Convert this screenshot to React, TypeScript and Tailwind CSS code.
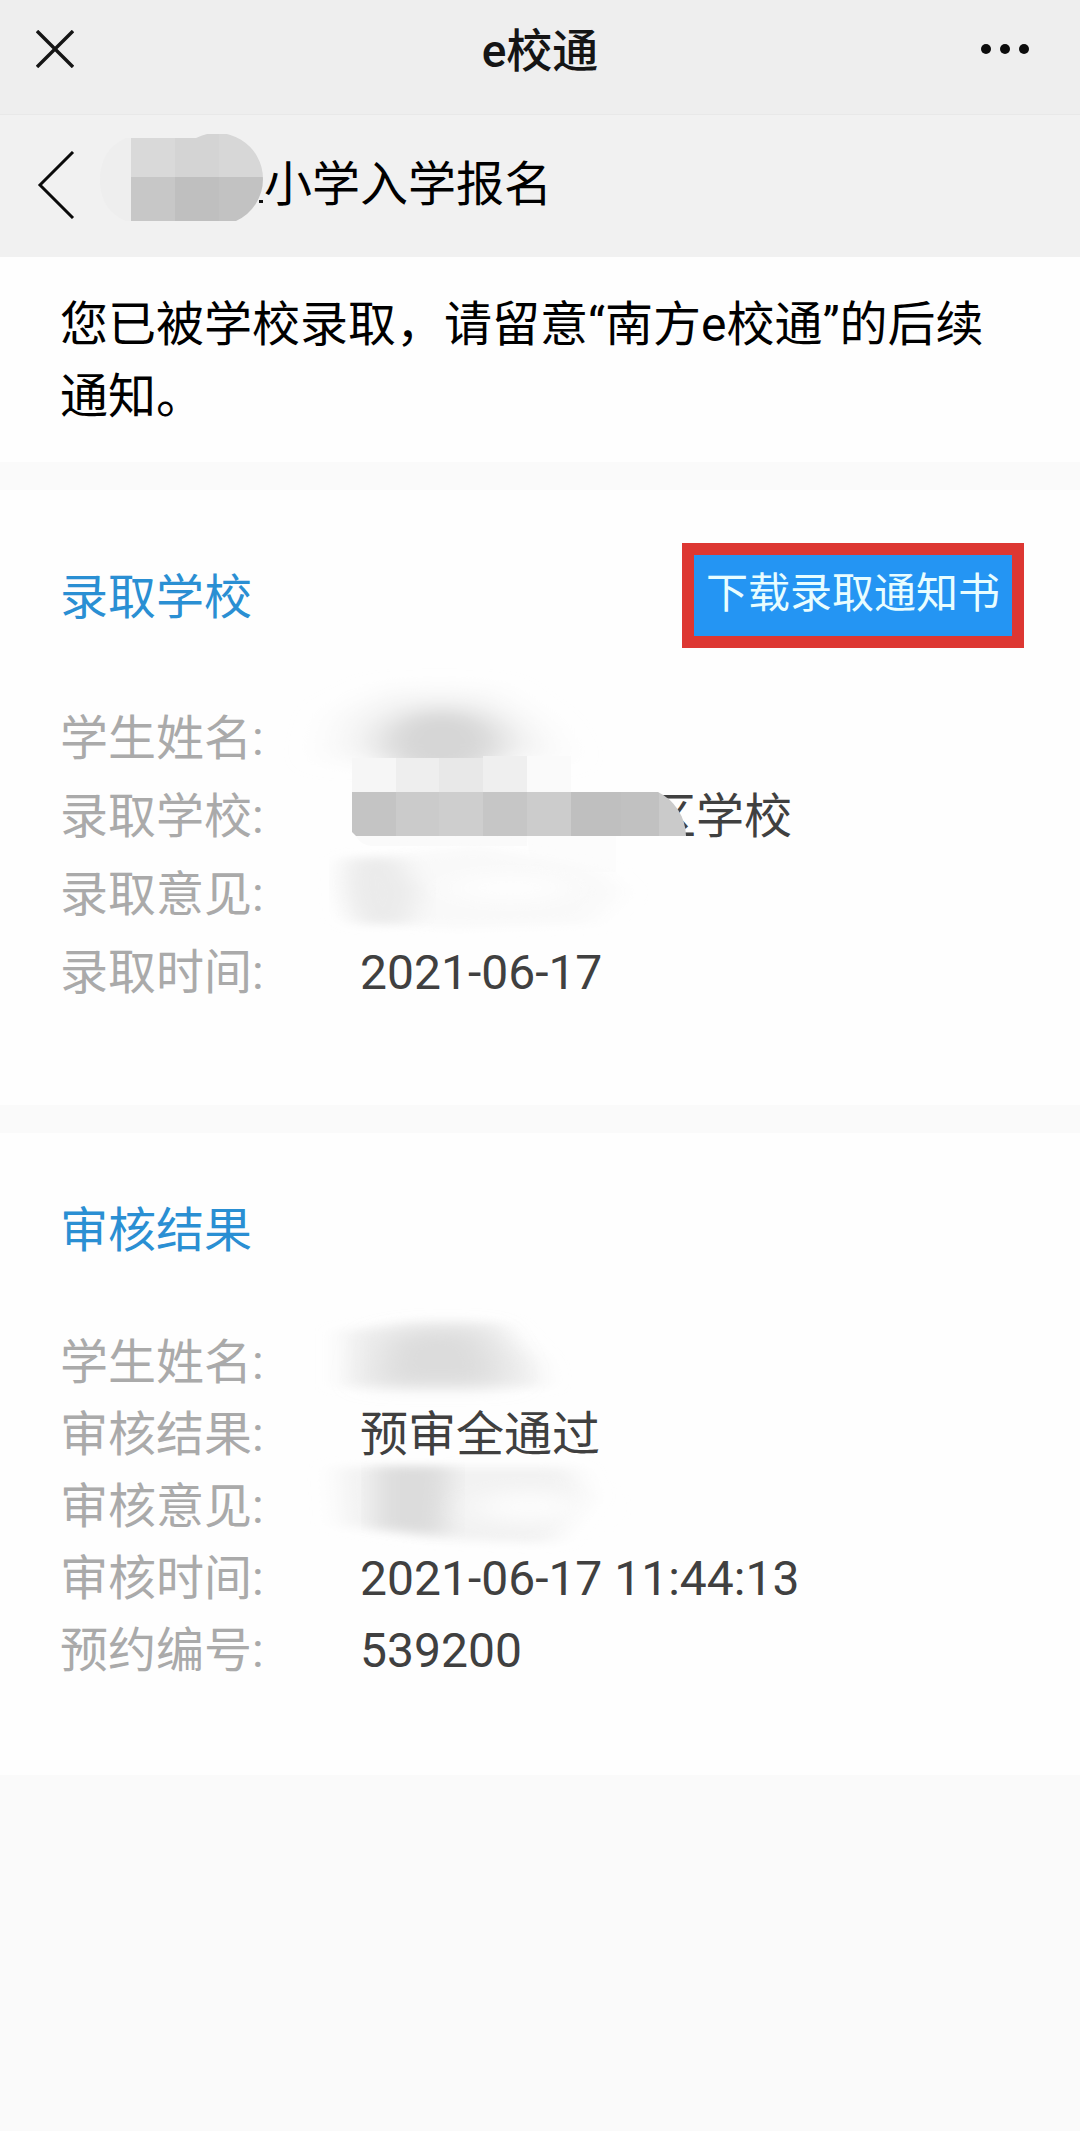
import type { ReactNode } from 'react'

interface InfoItem {
  label: string
  value: ReactNode
}

// Soft smudge over a private value, drawn across the row it hides
function Smudge({ id, children }: { id: string; children: ReactNode }) {
  return (
    <svg className="absolute -left-[60px] -top-6 h-[120px] w-[320px] overflow-visible" viewBox="0 0 320 120" aria-hidden="true">
      <defs>
        <filter id={id} x="-20%" y="-40%" width="140%" height="180%">
          <feGaussianBlur stdDeviation="14 5" />
        </filter>
        <filter id={`${id}-core`} x="-60%" y="-60%" width="220%" height="220%">
          <feGaussianBlur stdDeviation="20 9" />
        </filter>
      </defs>
      {children}
    </svg>
  )
}

function TitleMosaic() {
  return (
    <svg className="mb-3 h-[90px] w-[164px] shrink-0" viewBox="0 0 164 90" aria-hidden="true">
      <defs>
        <clipPath id="title-mosaic">
          <path d="M31 4H96A46 46 0 0 1 163 45A46 46 0 0 1 136 87H31Z" />
        </clipPath>
      </defs>
      <path d="M31 4H26Q0 16 0 46T26 87H31Z" fill="#eeeeee" />
      <rect x="159" y="66" width="4" height="3" fill="#111" />
      <g clipPath="url(#title-mosaic)">
        <rect x="31" y="0" width="44" height="43" fill="#d9d9d9" />
        <rect x="75" y="0" width="44" height="43" fill="#d4d4d4" />
        <rect x="119" y="0" width="45" height="43" fill="#d7d7d7" />
        <rect x="31" y="43" width="44" height="45" fill="#c7c7c7" />
        <rect x="75" y="43" width="44" height="45" fill="#bfbfbf" />
        <rect x="119" y="43" width="45" height="45" fill="#c2c2c2" />
      </g>
    </svg>
  )
}

function SchoolMosaic() {
  return (
    <svg className="absolute -left-2 -top-[22px] h-[120px] w-[336px]" viewBox="0 0 336 120" aria-hidden="true">
      <defs>
        <clipPath id="school-mosaic">
          <path d="M0 36H306A50 50 0 0 1 334 80H4L0 76Z" />
        </clipPath>
      </defs>
      <rect x="0" y="2" width="44" height="34" fill="#f6f6f6" />
      <rect x="44" y="2" width="43" height="34" fill="#eeeeee" />
      <rect x="87" y="2" width="44" height="34" fill="#e8e8e8" />
      <rect x="131" y="0" width="44" height="36" fill="#efefef" />
      <rect x="175" y="0" width="44" height="36" fill="#fafafa" />
      <path d="M4 80H175V90H20Q8 89 4 80Z" fill="#fafafa" />
      <path d="M175 80H264V116H180Z" fill="#fcfcfc" />
      <g clipPath="url(#school-mosaic)">
        <rect x="0" y="36" width="44" height="44" fill="#c4c4c4" />
        <rect x="44" y="36" width="43" height="44" fill="#cbcbcb" />
        <rect x="87" y="36" width="44" height="44" fill="#cecece" />
        <rect x="131" y="36" width="44" height="44" fill="#c6c6c6" />
        <rect x="175" y="36" width="44" height="44" fill="#cccccc" />
        <rect x="219" y="36" width="50" height="44" fill="#bfbfbf" />
        <rect x="269" y="36" width="38" height="44" fill="#c1c1c1" />
        <rect x="307" y="36" width="29" height="44" fill="#cacaca" />
      </g>
    </svg>
  )
}

const ADMISSION_ITEMS: InfoItem[] = [
  {
    label: '学生姓名',
    value: (
      <Smudge id="admission-name">
        <g filter="url(#admission-name-core)">
          <path d="M40 40L90 14H190L240 50L260 84H30Z" fill="#f5f5f5" />
          <ellipse cx="142" cy="66" rx="62" ry="34" fill="#d6d6d6" />
        </g>
      </Smudge>
    ),
  },
  {
    label: '录取学校',
    value: (
      <>
        <span className="inline-block w-72" />
        区学校
        <SchoolMosaic />
      </>
    ),
  },
  {
    label: '录取意见',
    value: (
      <Smudge id="admission-opinion">
        <path d="M50 28L180 14L300 40L320 60L290 92L150 96L54 88Z" fill="#f9f9f9" filter="url(#admission-opinion)" />
        <path d="M50 26H100L120 60L110 92H60Q36 60 50 26Z" fill="#ebebeb" filter="url(#admission-opinion)" />
        <ellipse cx="210" cy="56" rx="60" ry="12" fill="#fefefe" filter="url(#admission-opinion-core)" />
      </Smudge>
    ),
  },
  { label: '录取时间', value: '2021-06-17' },
]

const REVIEW_ITEMS: InfoItem[] = [
  {
    label: '学生姓名',
    value: (
      <Smudge id="review-name">
        <path d="M46 28L110 20H200L236 60L240 84H46Z" fill="#efefef" filter="url(#review-name)" />
        <path d="M86 34L120 26H180L200 60V82H76Z" fill="#dcdcdc" filter="url(#review-name-core)" />
      </Smudge>
    ),
  },
  { label: '审核结果', value: '预审全通过' },
  {
    label: '审核意见',
    value: (
      <Smudge id="review-opinion">
        <path d="M40 20H270L284 50L250 96L130 92L44 78Z" fill="#f2f2f2" filter="url(#review-opinion)" />
        <path d="M76 20H150L144 88L76 80Z" fill="#dcdcdc" filter="url(#review-opinion)" />
        <ellipse cx="230" cy="60" rx="56" ry="16" fill="#fcfcfc" filter="url(#review-opinion-core)" />
      </Smudge>
    ),
  },
  { label: '审核时间', value: '2021-06-17 11:44:13' },
  { label: '预约编号', value: '539200' },
]

function InfoList({ items, rowClassName }: { items: InfoItem[]; rowClassName: string }) {
  return (
    <dl>
      {items.map((item) => (
        <div key={item.label} className={`flex ${rowClassName}`}>
          <dt className="w-[300px] shrink-0 text-[#aaaaaa]">{item.label}:</dt>
          <dd className="relative flex-1 text-[#404040]">{item.value}</dd>
        </div>
      ))}
    </dl>
  )
}

export default function App() {
  return (
    <div className="min-h-screen bg-[#fafafa] font-[Roboto,'Noto_Sans_CJK_SC',sans-serif] text-[48px] leading-[72px] text-black">
      <header className="flex h-[115px] items-center justify-between border-b border-[#e8e8e8] bg-[#eeeeee] px-9 pb-4">
        <button type="button" aria-label="关闭" className="w-16">
          <svg className="size-[38px]" viewBox="0 0 38 38" fill="none" stroke="#151515" strokeWidth="3.4">
            <path d="M1 1L37 37M37 1L1 37" />
          </svg>
        </button>
        <h1 className="pt-1 text-[46px] font-medium text-[#151515]">e校通</h1>
        <button type="button" aria-label="更多" className="flex w-16">
          <svg className="h-3 w-[50px] shrink-0" viewBox="0 0 50 12" fill="#0c0c0c">
            <circle cx="6" cy="6" r="5" />
            <circle cx="25" cy="6" r="5" />
            <circle cx="44" cy="6" r="5" />
          </svg>
        </button>
      </header>

      <nav className="flex h-[142px] items-center bg-[#f1f1f1] pb-[3px] pl-9">
        <button type="button" aria-label="返回" className="w-16 shrink-0">
          <svg className="h-[68px] w-10" viewBox="0 0 40 68" fill="none" stroke="#0a0a0a" strokeWidth="3">
            <path d="M37 1L4 34L37 67" />
          </svg>
        </button>
        <TitleMosaic />
        <h2>小学入学报名</h2>
      </nav>

      <p className="bg-[#fefefe] px-[60px] pt-8 pb-[29px]">
        您已被学校录取，请留意“南方e校通”的后续通知。
      </p>

      {/* 录取学校 */}
      <section className="mt-7 bg-[#fefefe] px-[60px] pt-[53px] pb-[93px]">
        <div className="-mr-1 mb-[52px] flex items-center justify-between">
          <h3 className="pt-1 text-[#2a8fd3]">录取学校</h3>
          <button type="button" className="border-12 border-[#dd3732] bg-[#2495f3] px-3 pt-[9px] pb-3 text-[42px] leading-[60px] text-[#e8fdff]">
            下载录取通知书
          </button>
        </div>
        <InfoList items={ADMISSION_ITEMS} rowClassName="leading-[78px]" />
      </section>

      {/* 审核结果 */}
      <section className="mt-7 bg-[#fefefe] px-[60px] pt-[62px] pb-[88px]">
        <h3 className="mb-[60px] text-[#2a8fd3]">审核结果</h3>
        <InfoList items={REVIEW_ITEMS} rowClassName="leading-[72px]" />
      </section>
    </div>
  )
}
